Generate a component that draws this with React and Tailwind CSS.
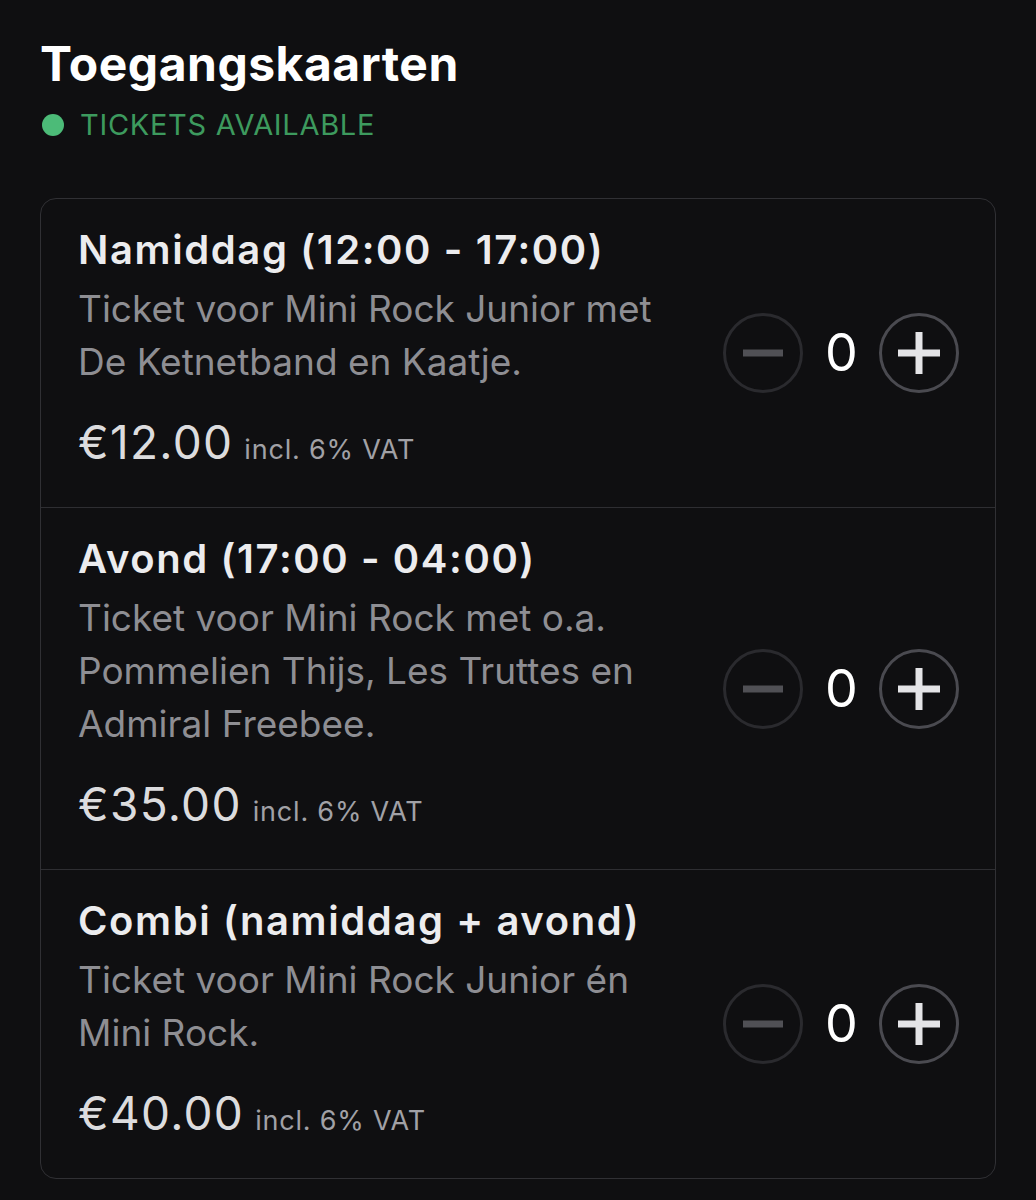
import React from 'react';

const tickets = [
  {
    name: 'Namiddag (12:00 - 17:00)',
    desc: 'Ticket voor Mini Rock Junior met De Ketnetband en Kaatje.',
    price: '€12.00',
  },
  {
    name: 'Avond (17:00 - 04:00)',
    desc: 'Ticket voor Mini Rock met o.a. Pommelien Thijs, Les Truttes en Admiral Freebee.',
    price: '€35.00',
  },
  {
    name: 'Combi (namiddag + avond)',
    desc: 'Ticket voor Mini Rock Junior én Mini Rock.',
    price: '€40.00',
  },
];

const Counter = () => {
  return (
    <div className="flex items-center shrink-0">
      <button className="w-[80px] h-[80px] rounded-full border-[3px] border-[#2a2a2e] flex items-center justify-center">
        <svg width="40" height="40" viewBox="0 0 40 40">
          <line x1="0" y1="20" x2="40" y2="20" stroke="#505055" strokeWidth="7" />
        </svg>
      </button>
      <span className="mx-[22px] text-[52px] leading-none text-white w-[32px] text-center">0</span>
      <button className="w-[80px] h-[80px] rounded-full border-[3px] border-[#4a4a50] flex items-center justify-center">
        <svg width="42" height="42" viewBox="0 0 42 42">
          <line x1="0" y1="21" x2="42" y2="21" stroke="#e4e4e7" strokeWidth="7" />
          <line x1="21" y1="0" x2="21" y2="42" stroke="#e4e4e7" strokeWidth="7" />
        </svg>
      </button>
    </div>
  );
};

export default function App() {
  return (
    <div className="min-h-[1200px] bg-[#0f0f11] px-[40px] pt-[36px] pb-[24px] font-['Inter',sans-serif]">
      <h1 className="text-[48px] leading-[56px] font-bold tracking-[0.5px] text-white">Toegangskaarten</h1>
      <div className="mt-[15px] flex items-center gap-[16px] h-[36px]">
        <span className="w-[22px] h-[22px] rounded-full bg-[#4cbb78] ml-[2px]"></span>
        <span className="text-[29px] tracking-[0.7px] text-[#3d9a5e] leading-[36px]">TICKETS AVAILABLE</span>
      </div>
      <div className="mt-[55px] border border-[#303034] rounded-[16px] divide-y divide-[#2e2e32]">
        {tickets.map((t) => (
          <div key={t.name} className="flex items-center justify-between pl-[37px] pr-[36px]">
            <div className="w-[604px] pt-[29px] pb-[37px]">
              <h3 className="text-[40px] leading-[44px] font-semibold tracking-[1.6px] text-[#ececee]">{t.name}</h3>
              <p className="mt-[10px] text-[37px] leading-[53px] text-[#8e8e93]">{t.desc}</p>
              <div className="mt-[26px] flex items-baseline">
                <span className="text-[46px] leading-[56px] tracking-[1.3px] text-[#dcdcde]">{t.price}</span>
                <span className="ml-[11px] text-[27px] leading-[28px] tracking-[0.8px] text-[#a1a1a6]">incl. 6% VAT</span>
              </div>
            </div>
            <Counter />
          </div>
        ))}
      </div>
    </div>
  );
}
